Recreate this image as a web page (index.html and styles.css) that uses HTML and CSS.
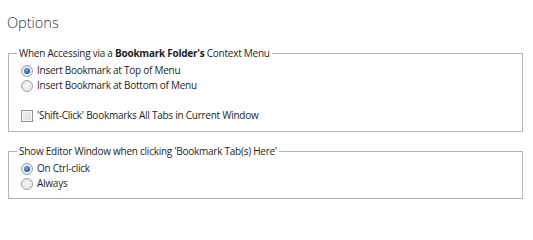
FILE: index.html
```html
<!DOCTYPE html>
<html>
<head>
<meta charset="utf-8">
<link rel="stylesheet" href="styles.css">
</head>
<body>
<div class="page">
  <h1 class="title">Options</h1>
  <fieldset class="group group-first">
    <legend class="group-legend">When Accessing via a <b>Bookmark Folder's</b> Context Menu</legend>
    <label class="opt"><span class="radio checked"></span><span>Insert Bookmark at Top of Menu</span></label>
    <label class="opt"><span class="radio"></span><span>Insert Bookmark at Bottom of Menu</span></label>
    <label class="opt opt-check"><span class="check"></span><span>'Shift-Click' Bookmarks All Tabs in Current Window</span></label>
  </fieldset>
  <fieldset class="group group-second">
    <legend class="group-legend">Show Editor Window when clicking 'Bookmark Tab(s) Here'</legend>
    <label class="opt"><span class="radio checked"></span><span>On Ctrl-click</span></label>
    <label class="opt"><span class="radio"></span><span>Always</span></label>
  </fieldset>
</div>
</body>
</html>
```
FILE: styles.css
```css
html, body {
  margin: 0;
  padding: 0;
  background: #ffffff;
}
.page {
  padding: 0 10px 0 8px;
  font-family: "Open Sans", "Noto Sans", sans-serif;
  font-size: 10px;
  letter-spacing: -0.25px;
  color: #1e1e1e;
  display: flex;
  flex-direction: column;
}
.title {
  margin: 13px 0 0 -1px;
  font-size: 14.5px;
  font-weight: 300;
  letter-spacing: 0;
  line-height: 20px;
  color: #333;
}
.group {
  margin: 0;
  border: 1px solid #b4b4b4;
  padding: 0 12px 8px 12px;
  display: flex;
  flex-direction: column;
}
.group-first {
  margin-top: 13px;
}
.group-second {
  margin-top: 12px;
  padding-bottom: 7px;
}
.group-legend {
  margin-left: -4px;
  padding: 0 2px;
  line-height: 15px;
}
.group-legend b {
  font-weight: 700;
}
.opt {
  display: flex;
  align-items: center;
  gap: 4px;
  line-height: 15px;
  height: 15px;
}
.group-first .opt:first-of-type {
  margin-top: 2px;
}
.group-second .opt:first-of-type {
  margin-top: 2px;
}
.opt-check {
  margin-top: 15px;
}
.radio {
  width: 10px;
  height: 10px;
  border-radius: 50%;
  border: 1px solid #a0a0a0;
  background: radial-gradient(circle, #f8f8f8 0%, #e0e0e0 100%);
  position: relative;
  flex: none;
}
.radio.checked::after {
  content: "";
  position: absolute;
  left: 2px;
  top: 2px;
  width: 6px;
  height: 6px;
  border-radius: 50%;
  background: radial-gradient(circle at 40% 35%, #7fb0e6 0%, #2a62a8 60%, #1d3f70 100%);
}
.check {
  width: 10px;
  height: 10px;
  border: 1px solid #909090;
  background: linear-gradient(135deg, #f2f2f2 0%, #dadada 100%);
  box-shadow: inset 0 0 0 1px #f8f8f8;
  flex: none;
}
```
